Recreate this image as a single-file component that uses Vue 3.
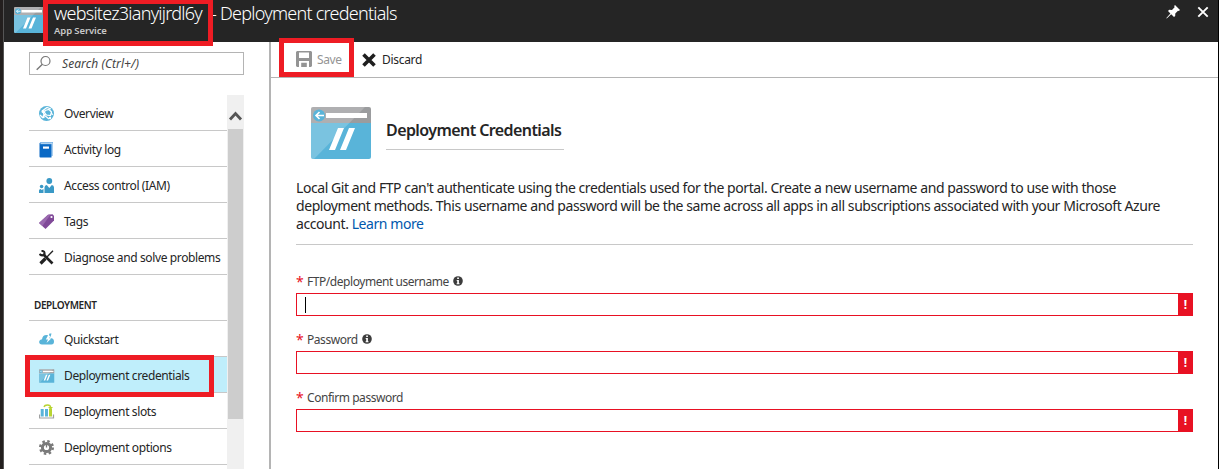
<script setup>
const general = [
  { id: 'overview', label: 'Overview' },
  { id: 'log', label: 'Activity log' },
  { id: 'access', label: 'Access control (IAM)' },
  { id: 'tags', label: 'Tags' },
  { id: 'diagnose', label: 'Diagnose and solve problems' },
]
const deployment = [
  { id: 'quick', label: 'Quickstart' },
  { id: 'cred', label: 'Deployment credentials', active: true },
  { id: 'slots', label: 'Deployment slots' },
  { id: 'options', label: 'Deployment options' },
]
const groups = [
  { key: 'general', items: general },
  { key: 'deployment', title: 'DEPLOYMENT', items: deployment },
]
const fields = [
  { id: 'user', label: 'FTP/deployment username', info: true, caret: true },
  { id: 'pass', label: 'Password', info: true },
  { id: 'confirm', label: 'Confirm password' },
]
</script>

<template>
  <div class="page">
    <svg width="0" height="0" class="defs">
      <symbol id="site" viewBox="0 0 60 52">
        <path d="M2 0H58Q60 0 60 2V16H0V2Q0 0 2 0Z" fill="#9b9c9e" />
        <path d="M0 16H60V50Q60 52 58 52H2Q0 52 0 50Z" fill="#59b4d9" />
        <path d="M2 0H54L3 52H2Q0 52 0 50V2Q0 0 2 0Z" fill="#fff" opacity=".2" />
        <rect x="15" y="6" width="41" height="5" fill="#fff" />
        <circle cx="8" cy="8.5" r="6" fill="#59b4d9" />
        <path d="M13 8.5H5M8.500 5L5 8.5L8.500 12" fill="none" stroke="#fff" stroke-width="1.6" />
        <path d="M27 21H33L24 43H18ZM38 21H44L35 43H29Z" fill="#fff" />
      </symbol>
    </svg>
    <div class="strip"></div>
    <div class="blade">
      <header class="header">
        <svg class="head-icon" width="30" height="26"><use href="#site" /></svg>
        <div class="titles">
          <div class="title"><span class="name">websitez3ianyijrdl6y</span><span class="dash">-</span><span class="sub">Deployment credentials</span></div>
          <div class="kind">App Service</div>
        </div>
        <svg class="pin" width="14" height="14" viewBox="0 0 14 14"><path d="M9 0L14 5L12.800 6L12 5.700L9.300 8.400L9.200 11L8 12L5.200 9.300L1 13.300L.3 13.600L.6 12.800L4.400 8.400L2 6L3.200 4.800L6 4.900L8.600 2.300L8.200 1.100Z" fill="#fff" /></svg>
        <svg class="close" width="12" height="12" viewBox="0 0 12 12"><path d="M1.300 1.300L10.700 10.700M10.700 1.300L1.300 10.700" stroke="#fff" stroke-width="1.900" /></svg>
        <div class="mark mark-name"></div>
      </header>
      <div class="body">
        <aside class="side">
          <div class="search">
            <svg width="16" height="16" viewBox="0 0 16 16"><circle cx="9.500" cy="6" r="4.500" fill="none" stroke="#777" stroke-width="1.200" /><path d="M6.400 9.300L.7 14.800" stroke="#777" stroke-width="1.400" /></svg>
            <span>Search (Ctrl+/)</span>
          </div>
          <div class="scroll">
            <nav class="menu">
              <template v-for="g in groups" :key="g.key">
                <div v-if="g.title" class="section">{{ g.title }}</div>
                <div v-for="it in g.items" :key="it.id" class="item" :class="{ active: it.active }">
                  <svg width="16" height="16" viewBox="0 0 16 16">
                    <g v-if="it.id === 'overview'">
                      <circle cx="7.500" cy="7.500" r="7.500" fill="#59b4d9" />
                      <path d="M3 5L8 1.500L12 3M4 5L5 9L10 13M8 7L4 10M12 6L13.500 9M1 9L4 12" fill="none" stroke="#fff" stroke-width="1.300" />
                      <circle cx="4" cy="5.500" r="1.500" fill="#fff" /><path d="M6 4.500L10 3.500L12.500 6L11.500 9.500L7.500 9L5.500 6.500Z" fill="#59b4d9" stroke="#fff" stroke-width="1.200" /><circle cx="4.500" cy="11" r="1.200" fill="#fff" /><circle cx="11" cy="12" r="1.200" fill="#fff" />
                    </g>
                    <g v-else-if="it.id === 'log'">
                      <path d="M1.500 0H14V14H1.500Z" fill="#7db4e5" /><path d="M.5 1.200L1.500 .3V2.200H12.500V15.500H1.500Q.5 15.500 .5 14.500Z" fill="#0a69c5" /><path d="M2 1.300H13.200V14" stroke="#dcecf9" fill="none" stroke-width=".7" /><path d="M4 4.500H10V6.700H4Z" fill="#fff" />
                    </g>
                    <g v-else-if="it.id === 'access'" fill="#3999c6">
                      <circle cx="10.300" cy="3" r="2.900" /><path d="M5.500 15V9.500Q5.500 7 7.800 7L10.300 10L12.800 7Q15 7 15 9.500V15Z" /><circle cx="2.600" cy="8.500" r="1.800" /><path d="M0 15V12.500Q0 11 1.700 11L2.600 12L4.500 11V15Z" />
                    </g>
                    <g v-else-if="it.id === 'tags'">
                      <path d="M9 .8L13.500 .3L15 1.800V6.500L6.500 15L0 9Z" fill="#804998" /><path d="M9 .8L11.500 .5L3.400 12L0 9Z" fill="#9a69af" /><circle cx="12.500" cy="3" r="1.100" fill="#fff" />
                    </g>
                    <g v-else-if="it.id === 'diagnose'" fill="none" stroke="#222">
                      <path d="M4 4L13.500 13.500" stroke-width="2.600" /><path d="M14 .8L7.700 7.200" stroke-width="1.300" /><path d="M6.500 8.500L1.500 13.500" stroke-width="3.200" /><path d="M2.500 .9Q6 .7 5.500 4.400Q3.500 6.500 .5 4" stroke-width="2" />
                    </g>
                    <g v-else-if="it.id === 'quick'">
                      <path d="M3 12.500Q.1 12.300 .1 9.800Q.4 7.500 3 7.300Q3.500 3 7.500 3Q10.500 3 11.300 6Q15 6 15 9.500Q15 12.500 12.500 12.500Z" fill="#59b4d9" /><path d="M9.500 2.500L6.800 7.500H9L7.500 11L12.500 6.300H10.300L12 2.500Z" fill="#fff" /><path d="M10.500 1.500L10 3L11.500 5L12.500 1.500Z" fill="#59b4d9" />
                    </g>
                    <use v-else-if="it.id === 'cred'" href="#site" x="0" y="1" width="15.500" height="14" />
                    <g v-else-if="it.id === 'slots'">
                      <path d="M1.700 5H4.700V12.500H1.700ZM6 5H9V12.500H6Z" fill="#59b4d9" /><path d="M10 4.500H13V12.500H10Z" fill="#b8d432" /><path d="M5 3Q5.500 1 8.500 1Q11.500 1 11.700 3.500" fill="none" stroke="#b8d432" stroke-width="1.300" /><path d="M9 3L11.700 5.500L14 3Z" fill="#b8d432" /><path d="M.5 10.500V14H14.500V10.500" fill="none" stroke="#a0a1a2" stroke-width="1.200" />
                    </g>
                    <g v-else fill="none" stroke="#7a7a7a">
                      <circle cx="7.500" cy="7.500" r="4.100" stroke-width="3" /><circle cx="7.500" cy="7.500" r="6.300" stroke-width="2.400" stroke-dasharray="2.474 2.474" /><path d="M7.500 4V7.500" stroke-width="1.300" />
                    </g>
                  </svg>
                  <span>{{ it.label }}</span>
                </div>
              </template>
              <div class="mark mark-item"></div>
            </nav>
            <div class="bar">
              <svg width="16" height="34" viewBox="0 0 16 34"><path d="M3 24.500L8.500 18.500L14 24.500" fill="none" stroke="#555" stroke-width="2.800" /></svg>
              <div class="thumb"></div>
            </div>
          </div>
        </aside>
        <main class="main">
          <div class="toolbar">
            <svg class="disk" width="16" height="16" viewBox="0 0 16 16"><path d="M1 0H15L16 1V15L15 16H1L0 15V1ZM3 1.500V7H13V1.500ZM3 10V16H5.200V11.800H10.800V16H13V10Z" fill="#949494" fill-rule="evenodd" /><path d="M6 13H8.500V16H6Z" fill="#949494" /></svg>
            <span class="save">Save</span>
            <svg class="x" width="14" height="14" viewBox="0 0 14 14"><path d="M1.500 1.500L12.500 12.500M12.500 1.500L1.500 12.500" stroke="#1f1f1f" stroke-width="3.600" /></svg>
            <span class="discard">Discard</span>
            <div class="mark mark-save"></div>
          </div>
          <div class="content">
            <div class="heading">
              <svg width="60" height="52"><use href="#site" /></svg>
              <h1>Deployment Credentials</h1>
            </div>
            <p class="intro">
              <span>Local Git and FTP can't authenticate using the credentials used for the portal. Create a new username and password to use with those</span><br />
              <span>deployment methods. This username and password will be the same across all apps in all subscriptions associated with your Microsoft Azure</span><br />
              <span>account. <a>Learn more</a></span>
            </p>
            <div v-for="f in fields" :key="f.id" class="field">
              <div class="label">
                <b>*</b><span>{{ f.label }}</span>
                <svg v-if="f.info" width="10" height="10" viewBox="0 0 10 10"><circle cx="5" cy="5" r="4.800" fill="#3c3c3c" /><path d="M4.200 1.500H5.900V3H4.200ZM3.700 4H5.900V7.300H6.500V8.200H3.600V7.300H4.200V4.900H3.700Z" fill="#fff" /></svg>
              </div>
              <div class="input"><i v-if="f.caret"></i><em>!</em></div>
            </div>
          </div>
        </main>
      </div>
    </div>
  </div>
</template>

<style>
body { background: #fff; overflow: hidden; }
</style>

<style scoped>
* { box-sizing: border-box; }
.page { display: flex; width: 1224px; height: 469px; overflow: hidden; font-family: "Noto Sans", "Open Sans", sans-serif; color: #252525; background: #fff; }
.defs { position: absolute; }
svg { display: block; flex: none; }
.strip { width: 4px; background: #231f1e; border-right: 1px solid #555; }
.blade { width: 1215px; height: 469px; border-right: 1px solid #000; }
.header { position: relative; height: 42px; background: #252525; display: flex; padding-left: 10px; }
.head-icon { margin-top: 7px; }
.titles { margin-left: 10px; white-space: nowrap; }
.title { display: flex; height: 25px; line-height: 26px; font-size: 18px; font-weight: 300; color: #fff; }
.name { width: 157px; letter-spacing: -.75px; }
.dash { width: 9px; }
.sub { letter-spacing: -.75px; }
.kind { font-size: 9.500px; line-height: 12px; color: #c8c8c8; font-weight: 600; letter-spacing: -.1px; }
.pin { margin: 5px 0 0 auto; }
.close { margin: 6px 9px 0 17px; }
.mark { position: absolute; border: 5px solid #ee1c24; z-index: 2; }
.mark-name { left: 39px; top: -1px; width: 170px; height: 47px; }
.body { display: flex; height: 427px; }
.side { width: 267px; border-right: 2px solid #b4b4b4; padding: 10px 0 0 25px; flex: none; }
.search { width: 215px; height: 23px; border: 1px solid #b4b4b4; display: flex; align-items: center; padding-left: 6px; font-size: 12px; font-style: italic; color: #444; letter-spacing: .07px; }
.search svg { margin-top: -2px; }
.search span { margin-left: 10px; }
.scroll { display: flex; margin-top: 20px; height: 374px; }
.menu { position: relative; width: 198px; }
.item { height: 36px; border-bottom: 1px solid #c8c8c8; display: flex; align-items: center; padding: 2px 0 0 10px; font-size: 12px; white-space: nowrap; letter-spacing: -.38px; }
.item span { margin-left: 9px; }
.active { background: #bfeefb; }
.section { height: 46px; border-bottom: 1px solid #c8c8c8; font-size: 10px; font-weight: 600; line-height: 16px; padding: 22px 0 0 5px; letter-spacing: -.4px; }
.mark-item { left: -4px; top: 260px; width: 189px; height: 42px; }
.bar { width: 17px; background: #f0f0f0; padding: 0 1px 0 1px; }
.bar svg { margin-left: -1px; }
.thumb { height: 290px; background: #cdcdcd; }
.main { flex: 1; min-width: 0; }
.toolbar { position: relative; height: 36px; border-bottom: 1px solid #b4b4b4; display: flex; align-items: center; padding-left: 25px; font-size: 12px; }
.disk { margin-top: -1px; }
.save { width: 26px; margin-left: 5px; color: #949494; letter-spacing: -.4px; }
.x { margin-left: 19px; }
.discard { margin-left: 6px; letter-spacing: -.3px; }
.mark-save { left: 8px; top: -4px; width: 75px; height: 39px; }
.content { padding: 29px 25px 0; }
.heading { display: flex; padding-left: 15px; height: 52px; }
h1 { margin: 10px 0 0 15px; width: 178px; height: 33px; border-bottom: 1px solid #c8c8c8; font-size: 16px; line-height: 27px; font-weight: 600; letter-spacing: -.58px; white-space: nowrap; }
.intro { margin: 20px 0 0; height: 66px; font-size: 14px; line-height: 18px; white-space: nowrap; border-bottom: 1px solid #c8c8c8; letter-spacing: -.428px; }
.intro a { color: #0058ad; }
.field { height: 58px; }
.intro + .field { margin-top: 28px; }
.label { height: 20px; line-height: 19px; display: flex; font-size: 12px; color: #444; letter-spacing: -.45px; }
.label span { line-height: 18px; }
.label b { width: 11px; color: #e81123; font-size: 14px; font-weight: 400; line-height: 17px; }
.label svg { margin: 3px 0 0 4px; }
.input { height: 23px; border: 1px solid #e81123; display: flex; align-items: center; }
.input i { width: 1px; height: 16px; margin-left: 8px; background: #000; }
.input em { margin-left: auto; width: 14px; height: 21px; padding-left: 1px; background: #e81123; color: #fff; font-style: normal; font-weight: 700; font-size: 12px; line-height: 21px; text-align: center; }
</style>
